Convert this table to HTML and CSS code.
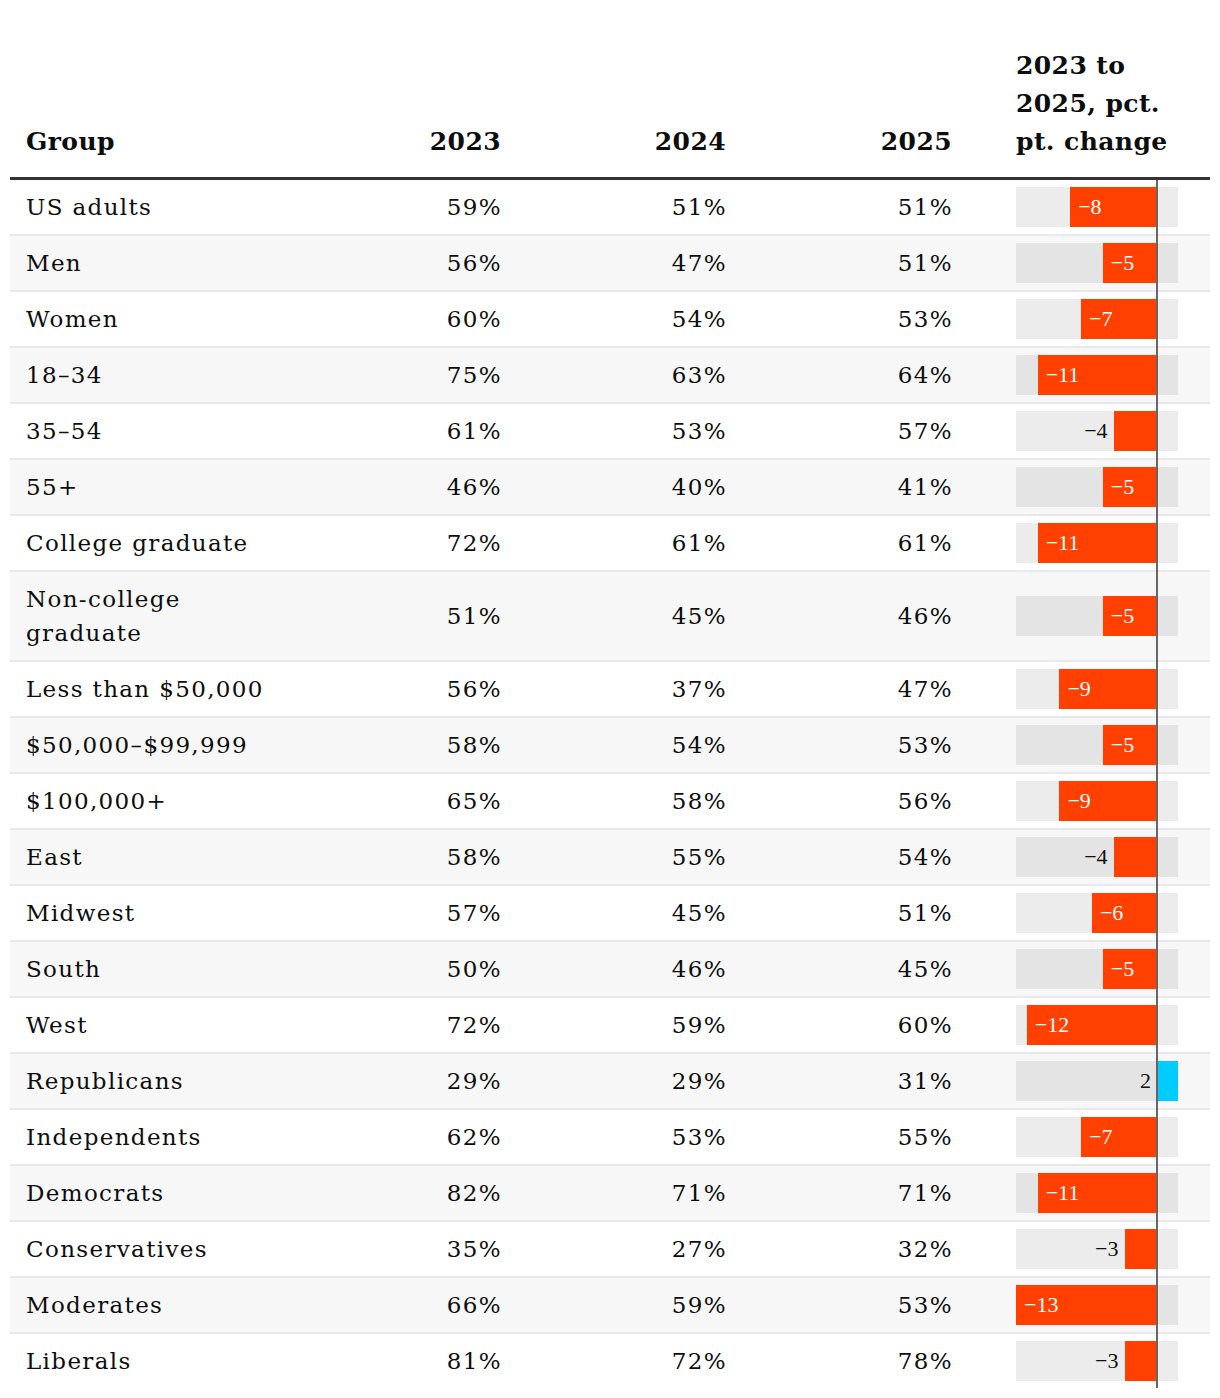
FILE: index.html
```html
<!DOCTYPE html>
<html lang="en">
<head>
<meta charset="utf-8">
<title>Change by group, 2023 to 2025</title>
<link rel="stylesheet" href="styles.css">
</head>
<body>
<div class="table">
  <div class="row head">
    <div class="cell group">Group</div>
    <div class="cell num">2023</div>
    <div class="cell num">2024</div>
    <div class="cell num">2025</div>
    <div class="cell charthead">2023 to 2025, pct. pt. change</div>
  </div>

  <div class="row">
    <div class="cell group">US adults</div>
    <div class="cell num">59%</div><div class="cell num">51%</div><div class="cell num">51%</div>
    <div class="cell chart"><div class="track"><div class="bar neg" style="left:54.2px;width:86.8px"><span class="lbl in">−8</span></div></div><div class="zero"></div></div>
  </div>
  <div class="row alt">
    <div class="cell group">Men</div>
    <div class="cell num">56%</div><div class="cell num">47%</div><div class="cell num">51%</div>
    <div class="cell chart"><div class="track"><div class="bar neg" style="left:86.8px;width:54.2px"><span class="lbl in">−5</span></div></div><div class="zero"></div></div>
  </div>
  <div class="row">
    <div class="cell group">Women</div>
    <div class="cell num">60%</div><div class="cell num">54%</div><div class="cell num">53%</div>
    <div class="cell chart"><div class="track"><div class="bar neg" style="left:65.1px;width:75.9px"><span class="lbl in">−7</span></div></div><div class="zero"></div></div>
  </div>
  <div class="row alt">
    <div class="cell group">18–34</div>
    <div class="cell num">75%</div><div class="cell num">63%</div><div class="cell num">64%</div>
    <div class="cell chart"><div class="track"><div class="bar neg" style="left:21.7px;width:119.3px"><span class="lbl in">−11</span></div></div><div class="zero"></div></div>
  </div>
  <div class="row">
    <div class="cell group">35–54</div>
    <div class="cell num">61%</div><div class="cell num">53%</div><div class="cell num">57%</div>
    <div class="cell chart"><div class="track"><div class="bar neg" style="left:97.6px;width:43.4px"><span class="lbl out">−4</span></div></div><div class="zero"></div></div>
  </div>
  <div class="row alt">
    <div class="cell group">55+</div>
    <div class="cell num">46%</div><div class="cell num">40%</div><div class="cell num">41%</div>
    <div class="cell chart"><div class="track"><div class="bar neg" style="left:86.8px;width:54.2px"><span class="lbl in">−5</span></div></div><div class="zero"></div></div>
  </div>
  <div class="row">
    <div class="cell group">College graduate</div>
    <div class="cell num">72%</div><div class="cell num">61%</div><div class="cell num">61%</div>
    <div class="cell chart"><div class="track"><div class="bar neg" style="left:21.7px;width:119.3px"><span class="lbl in">−11</span></div></div><div class="zero"></div></div>
  </div>
  <div class="row alt">
    <div class="cell group">Non-college graduate</div>
    <div class="cell num">51%</div><div class="cell num">45%</div><div class="cell num">46%</div>
    <div class="cell chart"><div class="track"><div class="bar neg" style="left:86.8px;width:54.2px"><span class="lbl in">−5</span></div></div><div class="zero"></div></div>
  </div>
  <div class="row">
    <div class="cell group">Less than $50,000</div>
    <div class="cell num">56%</div><div class="cell num">37%</div><div class="cell num">47%</div>
    <div class="cell chart"><div class="track"><div class="bar neg" style="left:43.4px;width:97.6px"><span class="lbl in">−9</span></div></div><div class="zero"></div></div>
  </div>
  <div class="row alt">
    <div class="cell group">$50,000–$99,999</div>
    <div class="cell num">58%</div><div class="cell num">54%</div><div class="cell num">53%</div>
    <div class="cell chart"><div class="track"><div class="bar neg" style="left:86.8px;width:54.2px"><span class="lbl in">−5</span></div></div><div class="zero"></div></div>
  </div>
  <div class="row">
    <div class="cell group">$100,000+</div>
    <div class="cell num">65%</div><div class="cell num">58%</div><div class="cell num">56%</div>
    <div class="cell chart"><div class="track"><div class="bar neg" style="left:43.4px;width:97.6px"><span class="lbl in">−9</span></div></div><div class="zero"></div></div>
  </div>
  <div class="row alt">
    <div class="cell group">East</div>
    <div class="cell num">58%</div><div class="cell num">55%</div><div class="cell num">54%</div>
    <div class="cell chart"><div class="track"><div class="bar neg" style="left:97.6px;width:43.4px"><span class="lbl out">−4</span></div></div><div class="zero"></div></div>
  </div>
  <div class="row">
    <div class="cell group">Midwest</div>
    <div class="cell num">57%</div><div class="cell num">45%</div><div class="cell num">51%</div>
    <div class="cell chart"><div class="track"><div class="bar neg" style="left:75.9px;width:65.1px"><span class="lbl in">−6</span></div></div><div class="zero"></div></div>
  </div>
  <div class="row alt">
    <div class="cell group">South</div>
    <div class="cell num">50%</div><div class="cell num">46%</div><div class="cell num">45%</div>
    <div class="cell chart"><div class="track"><div class="bar neg" style="left:86.8px;width:54.2px"><span class="lbl in">−5</span></div></div><div class="zero"></div></div>
  </div>
  <div class="row">
    <div class="cell group">West</div>
    <div class="cell num">72%</div><div class="cell num">59%</div><div class="cell num">60%</div>
    <div class="cell chart"><div class="track"><div class="bar neg" style="left:10.8px;width:130.2px"><span class="lbl in">−12</span></div></div><div class="zero"></div></div>
  </div>
  <div class="row alt">
    <div class="cell group">Republicans</div>
    <div class="cell num">29%</div><div class="cell num">29%</div><div class="cell num">31%</div>
    <div class="cell chart"><div class="track"><div class="bar pos" style="left:141px;width:21px"><span class="lbl out">2</span></div></div><div class="zero"></div></div>
  </div>
  <div class="row">
    <div class="cell group">Independents</div>
    <div class="cell num">62%</div><div class="cell num">53%</div><div class="cell num">55%</div>
    <div class="cell chart"><div class="track"><div class="bar neg" style="left:65.1px;width:75.9px"><span class="lbl in">−7</span></div></div><div class="zero"></div></div>
  </div>
  <div class="row alt">
    <div class="cell group">Democrats</div>
    <div class="cell num">82%</div><div class="cell num">71%</div><div class="cell num">71%</div>
    <div class="cell chart"><div class="track"><div class="bar neg" style="left:21.7px;width:119.3px"><span class="lbl in">−11</span></div></div><div class="zero"></div></div>
  </div>
  <div class="row">
    <div class="cell group">Conservatives</div>
    <div class="cell num">35%</div><div class="cell num">27%</div><div class="cell num">32%</div>
    <div class="cell chart"><div class="track"><div class="bar neg" style="left:108.5px;width:32.5px"><span class="lbl out">−3</span></div></div><div class="zero"></div></div>
  </div>
  <div class="row alt">
    <div class="cell group">Moderates</div>
    <div class="cell num">66%</div><div class="cell num">59%</div><div class="cell num">53%</div>
    <div class="cell chart"><div class="track"><div class="bar neg" style="left:0px;width:141px"><span class="lbl in">−13</span></div></div><div class="zero"></div></div>
  </div>
  <div class="row last">
    <div class="cell group">Liberals</div>
    <div class="cell num">81%</div><div class="cell num">72%</div><div class="cell num">78%</div>
    <div class="cell chart"><div class="track"><div class="bar neg" style="left:108.5px;width:32.5px"><span class="lbl out">−3</span></div></div><div class="zero"></div></div>
  </div>
</div>
</body>
</html>
```

FILE: styles.css
```css
html, body {
  margin: 0;
  padding: 0;
  background: #ffffff;
}

body {
  font-family: "DejaVu Serif", "Liberation Serif", serif;
  color: #0d0d0d;
}

.table {
  width: 1200px;
  margin: 0 10px;
  padding-top: 47px;
}

.row {
  display: grid;
  grid-template-columns: 282px 225px 225px 226px 242px;
  border-bottom: 2px solid #e8e8e8;
  font-size: 23px;
  letter-spacing: 1.35px;
  line-height: 34px;
}

.row.alt {
  background: #f7f7f7;
}

.row.last {
  border-bottom: none;
}

.row.head {
  border-bottom: 3px solid #333333;
  font-weight: bold;
  font-size: 25px;
  letter-spacing: 0.4px;
  line-height: 38px;
  align-items: end;
}

.cell {
  display: flex;
  align-items: center;
  padding: 10px 16px;
}

.head .cell {
  padding: 0 16px 16px 16px;
  align-items: flex-end;
}

.cell.num {
  justify-content: flex-end;
  padding-right: 15px;
}

.head .cell.num {
  padding-right: 16px;
}

.head .cell.charthead {
  padding: 0 0 16px 48px;
  width: 170px;
  box-sizing: content-box;
}

.cell.chart {
  position: relative;
  padding: 7px 0 7px 48px;
}

.track {
  position: relative;
  width: 162px;
  height: 40px;
  background: rgba(0, 0, 0, 0.075);
}

.bar {
  position: absolute;
  top: 0;
  height: 40px;
  display: flex;
  align-items: center;
}

.bar.neg {
  background: #ff4000;
}

.bar.pos {
  background: #00ccff;
}

.lbl {
  font-family: "Liberation Serif", "Times New Roman", serif;
  font-size: 22px;
  letter-spacing: 0;
  line-height: 40px;
  white-space: nowrap;
}

.lbl.in {
  color: #ffffff;
  padding-left: 8px;
}

.lbl.out {
  position: absolute;
  right: 100%;
  margin-right: 6px;
  color: #111111;
}

.zero {
  position: absolute;
  left: 188px;
  top: 0;
  bottom: -2px;
  width: 2px;
  background: #666666;
}

.last .zero {
  bottom: 0;
}
```
